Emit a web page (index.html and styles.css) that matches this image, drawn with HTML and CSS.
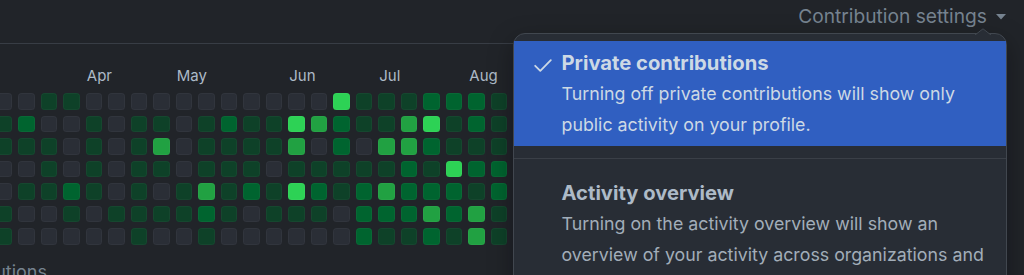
FILE: index.html
```html
<!DOCTYPE html>
<html lang="en">
<head>
<meta charset="utf-8">
<title>Contributions</title>
<link rel="stylesheet" href="styles.css">
</head>
<body>
<div class="page">
  <div class="topbar">
    <button class="settings-btn" type="button">
      <span>Contribution settings</span>
      <svg class="caret" width="10" height="6" viewBox="0 0 10 6"><path d="M0 0h10L5 5.5z" fill="currentColor"/></svg>
    </button>
  </div>

  <div class="graph-box">
    <div class="months">
      <span class="month m-apr">Apr</span>
      <span class="month m-may">May</span>
      <span class="month m-jun">Jun</span>
      <span class="month m-jul">Jul</span>
      <span class="month m-aug">Aug</span>
    </div>
    <div class="grid">
      <span class="d l0"></span><span class="d l1"></span><span class="d l1"></span><span class="d l0"></span><span class="d l0"></span><span class="d l1"></span><span class="d l1"></span>
      <span class="d l0"></span><span class="d l2"></span><span class="d l1"></span><span class="d l0"></span><span class="d l1"></span><span class="d l0"></span><span class="d l0"></span>
      <span class="d l1"></span><span class="d l0"></span><span class="d l1"></span><span class="d l1"></span><span class="d l1"></span><span class="d l0"></span><span class="d l0"></span>
      <span class="d l1"></span><span class="d l0"></span><span class="d l0"></span><span class="d l0"></span><span class="d l2"></span><span class="d l1"></span><span class="d l0"></span>
      <span class="d l0"></span><span class="d l1"></span><span class="d l1"></span><span class="d l1"></span><span class="d l1"></span><span class="d l0"></span><span class="d l0"></span>
      <span class="d l0"></span><span class="d l0"></span><span class="d l0"></span><span class="d l0"></span><span class="d l0"></span><span class="d l1"></span><span class="d l0"></span>
      <span class="d l0"></span><span class="d l1"></span><span class="d l1"></span><span class="d l1"></span><span class="d l1"></span><span class="d l1"></span><span class="d l1"></span>
      <span class="d l0"></span><span class="d l1"></span><span class="d l3"></span><span class="d l1"></span><span class="d l0"></span><span class="d l1"></span><span class="d l0"></span>
      <span class="d l0"></span><span class="d l0"></span><span class="d l0"></span><span class="d l0"></span><span class="d l1"></span><span class="d l1"></span><span class="d l0"></span>
      <span class="d l0"></span><span class="d l1"></span><span class="d l1"></span><span class="d l1"></span><span class="d l3"></span><span class="d l2"></span><span class="d l1"></span>
      <span class="d l0"></span><span class="d l2"></span><span class="d l1"></span><span class="d l1"></span><span class="d l1"></span><span class="d l1"></span><span class="d l0"></span>
      <span class="d l0"></span><span class="d l1"></span><span class="d l1"></span><span class="d l1"></span><span class="d l2"></span><span class="d l0"></span><span class="d l0"></span>
      <span class="d l0"></span><span class="d l1"></span><span class="d l1"></span><span class="d l0"></span><span class="d l1"></span><span class="d l1"></span><span class="d l0"></span>
      <span class="d l0"></span><span class="d l4"></span><span class="d l3"></span><span class="d l1"></span><span class="d l4"></span><span class="d l1"></span><span class="d l0"></span>
      <span class="d l0"></span><span class="d l3"></span><span class="d l0"></span><span class="d l1"></span><span class="d l2"></span><span class="d l1"></span><span class="d l0"></span>
      <span class="d l4"></span><span class="d l2"></span><span class="d l2"></span><span class="d l1"></span><span class="d l1"></span><span class="d l0"></span><span class="d l0"></span>
      <span class="d l1"></span><span class="d l1"></span><span class="d l0"></span><span class="d l1"></span><span class="d l2"></span><span class="d l2"></span><span class="d l2"></span>
      <span class="d l1"></span><span class="d l1"></span><span class="d l3"></span><span class="d l1"></span><span class="d l3"></span><span class="d l2"></span><span class="d l1"></span>
      <span class="d l1"></span><span class="d l3"></span><span class="d l3"></span><span class="d l2"></span><span class="d l2"></span><span class="d l2"></span><span class="d l1"></span>
      <span class="d l2"></span><span class="d l4"></span><span class="d l2"></span><span class="d l1"></span><span class="d l2"></span><span class="d l3"></span><span class="d l2"></span>
      <span class="d l2"></span><span class="d l1"></span><span class="d l1"></span><span class="d l4"></span><span class="d l2"></span><span class="d l2"></span><span class="d l1"></span>
      <span class="d l2"></span><span class="d l2"></span><span class="d l1"></span><span class="d l2"></span><span class="d l1"></span><span class="d l3"></span><span class="d l3"></span>
      <span class="d l1"></span><span class="d l1"></span><span class="d l1"></span><span class="d l2"></span><span class="d l2"></span><span class="d l1"></span><span class="d l1"></span>
    </div>
    <div class="footnote"><span>Learn how we count contributions</span></div>
  </div>

  <div class="menu" role="menu">
    <svg class="menu-pointer" width="18" height="7" viewBox="0 0 18 7"><path d="M1 7 L9 0.8 L17 7" fill="#282d35" stroke="#41474f" stroke-width="1"/></svg>
    <div class="menu-item is-active" role="menuitemcheckbox" aria-checked="true">
      <span class="check-col">
        <svg class="check" width="18" height="13" viewBox="0 0 18 13"><polyline points="1.2,6.8 6.3,11.8 16.8,1.2" fill="none" stroke="currentColor" stroke-width="1.8" stroke-linecap="round" stroke-linejoin="round"/></svg>
      </span>
      <span class="item-body">
        <span class="item-title">Private contributions</span>
        <span class="item-desc">Turning off private contributions will show only public activity on your profile.</span>
      </span>
    </div>
    <div class="menu-divider"></div>
    <div class="menu-item" role="menuitemcheckbox" aria-checked="false">
      <span class="check-col"></span>
      <span class="item-body">
        <span class="item-title">Activity overview</span>
        <span class="item-desc">Turning on the activity overview will show an overview of your activity across organizations and repositories.</span>
      </span>
    </div>
  </div>
</div>
</body>
</html>
```

FILE: styles.css
```css
* { box-sizing: border-box; }

html, body {
  margin: 0;
  padding: 0;
}

body {
  background: #212429;
  font-family: Inter, "Noto Sans", "Liberation Sans", sans-serif;
  color: #adbac7;
  overflow: hidden;
}

.page {
  position: relative;
  width: 1024px;
  height: 275px;
}

/* top bar */
.topbar {
  height: 43px;
  display: flex;
  justify-content: flex-end;
  align-items: flex-start;
  padding: 5px 18px 0 0;
}

.settings-btn {
  display: flex;
  align-items: center;
  gap: 9px;
  background: none;
  border: 0;
  padding: 0;
  font: inherit;
  font-size: 19.2px;
  line-height: 22px;
  color: #768390;
}

.caret { display: block; margin-top: 1px; }

/* graph */
.graph-box {
  margin-left: -30px;
  width: 990px;
  border: 1px solid #383d45;
  border-radius: 6px;
  padding: 22px 0 0 24.8px;
  height: 260px;
}

.months,
.grid {
  display: grid;
  grid-template-columns: repeat(23, 16.5px);
  column-gap: 6px;
}

.months {
  height: 20px;
  font-size: 15px;
  line-height: 20px;
  color: #adbac7;
  margin-bottom: 7px;
}

.month { white-space: nowrap; margin-left: 1px; }
.m-apr { grid-column: 5 / span 3; }
.m-may { grid-column: 9 / span 3; }
.m-jun { grid-column: 14 / span 3; }
.m-jul { grid-column: 18 / span 3; }
.m-aug { grid-column: 22 / span 2; }

.grid {
  grid-template-rows: repeat(7, 16.5px);
  row-gap: 6px;
  grid-auto-flow: column;
}

.d {
  display: block;
  border-radius: 3.5px;
  box-shadow: inset 0 0 0 1px rgba(255, 255, 255, 0.035);
}
.l0 { background: #2a2e36; }
.l1 { background: #0e4128; }
.l2 { background: #00642f; }
.l3 { background: #21a142; }
.l4 { background: #2dd255; }

.footnote {
  width: 47px;
  margin: 15.5px 0 0 4.2px;
  display: flex;
  justify-content: flex-end;
  font-size: 18px;
  line-height: 24px;
  color: #768390;
  white-space: nowrap;
}

/* dropdown menu */
.menu {
  position: absolute;
  left: 512.5px;
  top: 33px;
  width: 494.5px;
  height: 260px;
  background: #282d35;
  border: 1px solid #41474f;
  border-radius: 12px;
  padding-top: 7px;
  box-shadow: 0 8px 24px rgba(1, 4, 9, 0.35);
}

.menu-pointer {
  position: absolute;
  top: -6.5px;
  left: 460px;
  display: block;
}

.menu-item {
  display: grid;
  grid-template-columns: 48px 1fr;
  padding: 7.7px 16px 5.3px 0;
}

.menu-item.is-active {
  background: #305fc1;
  color: #cdd9e5;
}

.check-col { display: block; }

.check {
  display: block;
  margin: 10.6px 0 0 20.5px;
  color: #cdd9e5;
}

.item-body { display: block; }

.item-title {
  display: block;
  font-size: 20.2px;
  font-weight: 700;
  line-height: 28px;
  color: #adbac7;
}

.item-desc {
  display: block;
  margin-top: 2.7px;
  font-size: 17.8px;
  line-height: 30.5px;
  color: #a2adb9;
}

.is-active .item-title,
.is-active .item-desc { color: #cdd9e5; }

.menu-divider {
  height: 1px;
  background: #3a3f47;
  margin: 12.3px 0 12px;
}
```
